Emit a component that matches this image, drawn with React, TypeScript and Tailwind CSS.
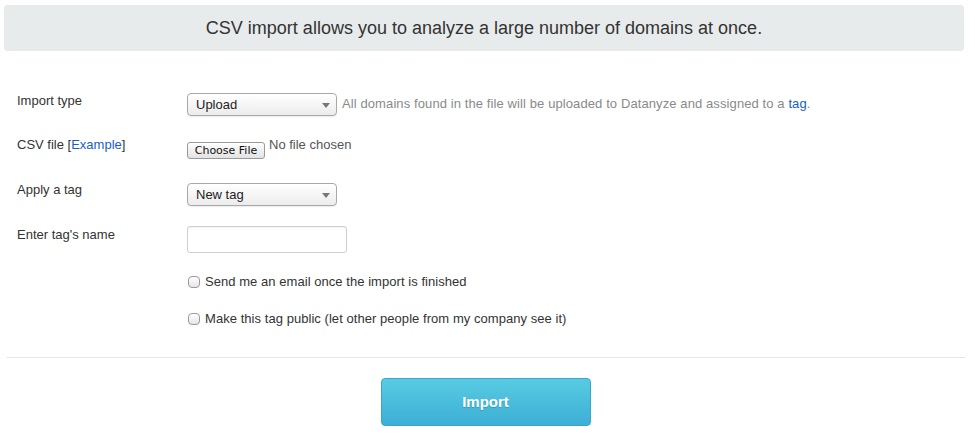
import React from 'react';

const font = { fontFamily: '"Liberation Sans", Arial, Helvetica, sans-serif' };

function FakeSelect({ value }: { value: string }) {
  return (
    <div className="relative h-[23px] w-[150px] rounded-[4px] border border-[#a9a9a9] bg-gradient-to-b from-white to-[#ececec] shadow-[0_1px_1px_rgba(0,0,0,0.08)]">
      <select
        defaultValue={value}
        className="h-full w-full appearance-none bg-transparent pl-[8px] pr-6 text-[13px] leading-[21px] text-[#222] outline-none"
      >
        <option>{value}</option>
      </select>
      <svg className="pointer-events-none absolute right-[6px] top-[9px]" width="8" height="5" viewBox="0 0 8 5">
        <path d="M0 0h8L4 5z" fill="#777" />
      </svg>
    </div>
  );
}

function CheckRow({ label }: { label: string }) {
  return (
    <label className="flex h-[18px] items-center text-[13px] tracking-[0.05px] text-[#333]">
      <span className="ml-[1px] mr-[5px] inline-block h-[12px] w-[12px] rounded-[4px] border border-[#9a9a9a] bg-gradient-to-b from-white to-[#e6e6e6]" />
      {label}
    </label>
  );
}

export default function App() {
  return (
    <div className="min-h-[435px] w-[975px] bg-white pt-[5px]" style={font}>
      {/* Intro banner */}
      <div className="mx-[4px] mr-[11px] flex h-[46px] items-center justify-center rounded-[4px] bg-[#e8ebeb] text-[18px] text-[#333]">
        CSV import allows you to analyze a large number of domains at once.
      </div>

      {/* Form */}
      <div className="pl-[17px] pt-[41px] text-[13px] text-[#333]">
        <div className="flex h-[44px] items-start">
          <div className="w-[170px] leading-[18px]">Import type</div>
          <div className="mt-[1px] flex items-start">
            <FakeSelect value="Upload" />
            <span className="ml-[5px] leading-[22px] tracking-[0.1px] text-[#8a8a8a]">
              All domains found in the file will be uploaded to Datanyze and assigned to a{' '}
              <a className="text-[#1a5fc7]" href="#">tag</a>.
            </span>
          </div>
        </div>

        <div className="flex h-[45px] items-start">
          <div className="w-[170px] leading-[18px]">
            CSV file [<a className="text-[#1a5fc7]" href="#">Example</a>]
          </div>
          <div className="flex items-start">
            <button
              className="mt-[6px] h-[17px] w-[78px] rounded-[3px] border border-[#9a9a9a] bg-gradient-to-b from-white to-[#e2e2e2] text-[11px] leading-[15px] text-[#111]"
              style={{ fontFamily: '"DejaVu Sans", Verdana, sans-serif' }}
            >
              Choose File
            </button>
            <span className="ml-[4px] leading-[18px] text-[#555]">No file chosen</span>
          </div>
        </div>

        <div className="flex h-[45px] items-start">
          <div className="w-[170px] leading-[18px]">Apply a tag</div>
          <div className="mt-[2px]">
            <FakeSelect value="New tag" />
          </div>
        </div>

        <div className="flex h-[47px] items-start">
          <div className="w-[170px] leading-[18px]">Enter tag's name</div>
          <input
            type="text"
            className="h-[27px] w-[160px] rounded-[3px] border border-[#cfcfcf] bg-white px-2 text-[13px] outline-none shadow-[inset_0_1px_1px_rgba(0,0,0,0.05)]"
          />
        </div>

        <div className="pl-[170px]">
          <CheckRow label="Send me an email once the import is finished" />
          <div className="h-[19px]" />
          <CheckRow label="Make this tag public (let other people from my company see it)" />
        </div>
      </div>

      <div className="mx-[7px] mr-[10px] mt-[29px] border-t border-[#e6e6e6]" />

      <div className="flex justify-center pt-[20px] pr-[4px]">
        <button className="h-[48px] w-[210px] rounded-[4px] border border-[#3aa6c9] bg-gradient-to-b from-[#58cbe3] to-[#3cafd5] text-[15px] font-bold text-white [text-shadow:0_1px_1px_rgba(0,0,0,0.2)]">
          Import
        </button>
      </div>
    </div>
  );
}
